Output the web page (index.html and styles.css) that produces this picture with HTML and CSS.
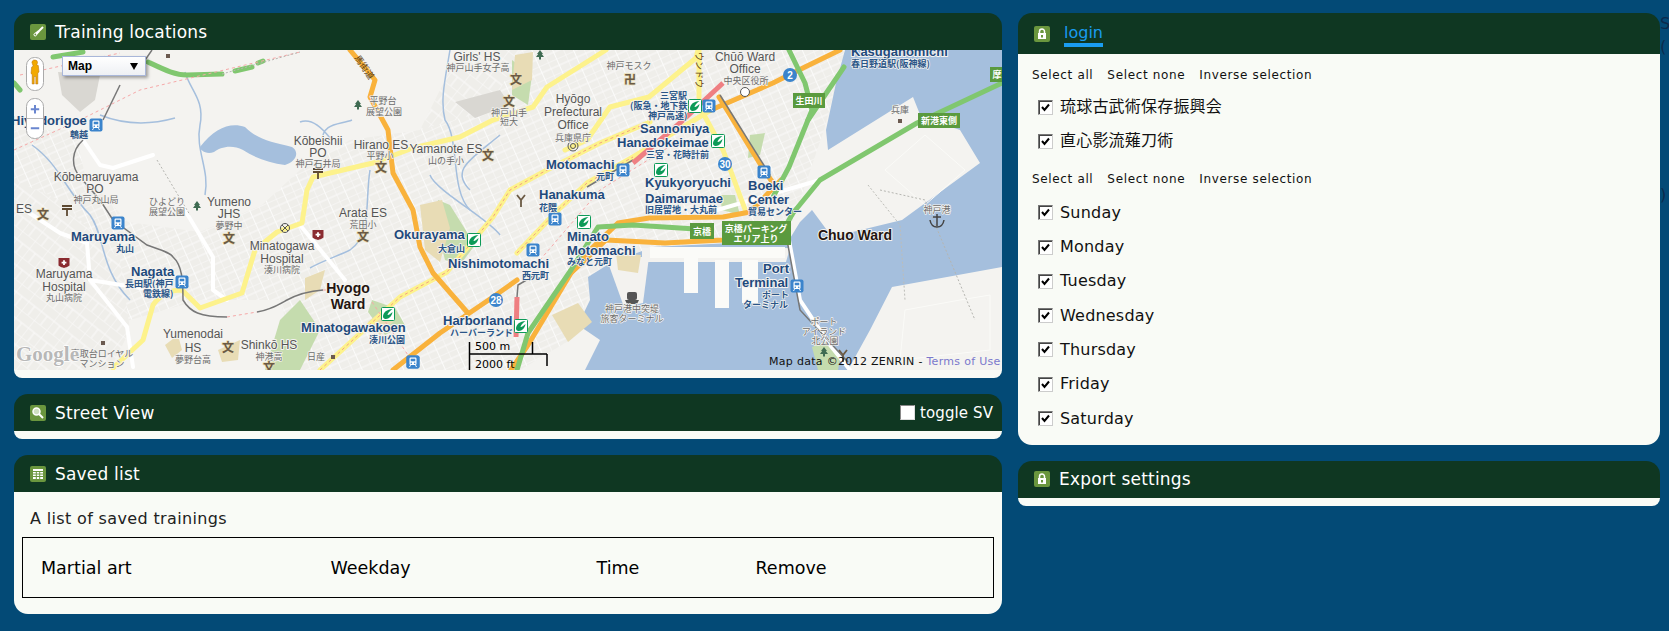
FILE: index.html
```html
<!DOCTYPE html>
<html lang="en">
<head>
<meta charset="utf-8">
<title>Training locations</title>
<link rel="stylesheet" href="styles.css">
</head>
<body>
<div class="page">
  <main class="col-left">
    <section class="panel">
      <header class="head">
        <svg class="ico" viewBox="0 0 16 16"><path class="ico-bg" d="M2 0h12a2 2 0 0 1 2 2v12a2 2 0 0 1-2 2H2a2 2 0 0 1-2-2V2a2 2 0 0 1 2-2z"/><path class="ico-line" d="M13 3 8 8"/><path class="ico-fill" d="M8 6.500 9.500 8l-3 3.500a1.600 1.600 0 1 1-2.200-2.200z"/><circle class="ico-hole" cx="5.300" cy="10.500" r=".9"/></svg>
        <h2 class="title">Training locations</h2>
      </header>
      <div class="map">
        <svg class="map-svg" viewBox="14 50 988 320" xmlns="http://www.w3.org/2000/svg">
          <defs>
            <pattern id="streets" width="19" height="14" patternUnits="userSpaceOnUse" patternTransform="rotate(-24)">
              <rect class="pat-bg" width="19" height="14"/>
              <path class="pat" d="M0 0H19M0 7H19M0 0V14M9.500 0V14"/>
            </pattern>
            <pattern id="streets2" width="16" height="21" patternUnits="userSpaceOnUse" patternTransform="rotate(38)">
              <rect class="pat-bg" width="16" height="21"/>
              <path class="pat" d="M0 0H16M0 10H16M0 0V21M8 10V21"/>
            </pattern>
            <g id="st"><rect class="st-bg" x="-6.500" y="-6.500" width="13" height="13" rx="2"/><rect class="st-w" x="-3.500" y="-4.500" width="7" height="7.500" rx="1.200"/><rect class="st-b" x="-2.300" y="-3.300" width="4.600" height="2.600"/><circle class="st-b" cx="-1.700" cy="1.300" r=".8"/><circle class="st-b" cx="1.700" cy="1.300" r=".8"/><path class="st-wl" d="M-2.500 3.200-3.500 5M2.500 3.200 3.500 5"/></g>
            <g id="mk"><rect class="mk-bg" x="-6.500" y="-6.500" width="13" height="13" rx="1"/><path class="mk-s" d="M-5 3C-5-2-1-4.500 4.500-5 2-3.500 1-2-.5.500-.5 1.500 1.500 1 4.500-2 4 2 1 5-2 5-3.500 5-4.500 4.500-5 3z"/></g>
            <g id="tr"><path class="tree" d="M0-6 3 -2H1.800L4 1H1V3.500H-1V1H-4L-1.800-2H-3z"/></g>
            <g id="hs"><path class="hs" d="M-5.500-5H5.500V2.500C3.500 4 1.500 4.500 0 5-1.500 4.500-3.500 4-5.500 2.500z"/><path class="hs-p" d="M0-2.800V2M-2.400-.4H2.400"/></g>
            <g id="po"><path class="po" d="M-5-5H5M-5-2H5M0-2V5"/></g>
          </defs>

          <rect class="land" x="14" y="50" width="988" height="320"/>
          <path class="city" d="M14 130H75L85 175 128 222 200 232 262 205 300 170 350 140 420 130 445 100 515 50H845L824 130 790 230 650 250 600 270 570 340 520 370H300L280 300 200 300 130 320 14 370z"/>
          <path class="city2" d="M14 180 60 200 120 260 130 330 110 370H14z"/>
          <path class="city2" d="M460 50H520L490 110 420 130 440 90z"/>

          <!-- parks and campuses -->
          <path class="park" d="M265 370 280 320 300 300 310 315 320 330 300 370z"/>
          <path class="park" d="M372 300 395 308 405 325 385 335 368 312z"/>
          <path class="park" d="M438 200 450 205 475 245 460 265 445 260 436 225z"/>
          <path class="park" d="M512 60 532 75 528 105 512 95z"/>
          <path class="park" d="M750 135 765 133 760 155 748 158z"/>
          <path class="park" d="M720 195 735 195 740 215 722 210z"/>
          <path class="camp" d="M420 205 442 200 450 228 440 262 425 250z"/>
          <path class="camp" d="M515 55 533 52 532 80 512 90z"/>
          <path class="camp" d="M165 345 178 335 182 350 172 358z"/>
          <path class="camp" d="M218 350 240 340 238 360 222 362z"/>
          <path class="camp" d="M368 322 382 310 395 320 380 335z"/>
          <path class="camp" d="M305 278 325 270 320 290 305 300z"/>
          <path class="gr" d="M455 102 500 90 510 105 475 118z"/>
          <path class="gr" d="M58 72 100 75 95 100 80 112 62 95z"/>

          <!-- water -->
          <path class="water" d="M845 50H1002V267L892 287 870 330 848 370H585L600 340 578 325 590 300 588 277 612 262 653 247 789 240 800 222 812 210 832 237 902 220 980 163 960 130 921 117 913 97 828 150 826 130 836 83z"/>
          <path class="water" d="M200 147C215 128 230 122 245 127 258 140 272 142 292 147 300 152 296 162 285 165 270 163 255 158 243 150 232 144 220 147 214 152 206 155 200 150 200 147z"/>
          <path class="bank" d="M642 248H790L786 262H642z"/>
          <path class="bank" d="M606 257 649 257 643 303 624 307z"/>
          <path class="pier" d="M684 253H698V293H684zM715 260H729V308H715zM742 260H758V303H742zM650 247H785V258H650z"/>
          <path class="camp" d="M552 315 578 303 592 322 568 342z"/>
          <path class="camp" d="M616 253 641 255 638 273 618 270z"/>
          <path class="park" d="M812 347 828 340 840 358 838 370H818z"/>
          <path class="outline" d="M885 170 925 135 965 170 925 205zM905 310 960 300 990 295V350L900 360z"/>
          <path class="outline-d" d="M868 185 900 225 905 300"/>

          <!-- streams -->
          <g class="stream">
            <path d="M185 72C190 90 205 100 200 125 195 150 210 170 205 195"/>
            <path d="M100 115C125 125 150 125 175 118"/>
            <path d="M32 145C60 165 65 190 90 215 105 235 100 270 130 300"/>
            <path d="M450 50C445 80 440 100 445 120 460 140 450 190 470 210"/>
            <path d="M352 120C340 125 322 122 322 142M300 122C310 118 320 125 330 138"/>
            <path d="M370 170C365 200 372 235 350 250 340 255 320 262 310 268"/>
            <path d="M430 175C435 190 490 220 500 235"/>
            <path d="M500 135C470 160 450 170 470 190"/>
          </g>

          <!-- white arterial roads -->
          <g class="road-w">
            <path d="M83 140 100 165 113 168 153 155"/>
            <path d="M20 207 60 233 87 243 90 280 127 327 133 367"/>
            <path d="M90 280 153 290"/>
            <path d="M183 207 213 257 213 290 227 300"/>
            <path d="M300 225 345 280"/>
            <path d="M789 240 800 300 830 345 850 370"/>
            <path d="M820 180 700 215"/>
          </g>

          <!-- yellow roads -->
          <g class="road-y">
            <path d="M113 368 143 340 153 305C160 295 170 290 182 290L200 308 242 293 255 250 277 232 302 223 307 190 313 177 373 163 413 148 460 137 493 120 533 107 547 87 606 50"/>
            <path d="M565 150 587 140 610 107 649 97 696 58 698 50"/>
            <path d="M723 150 746 212M703 113 723 150"/>
            <path d="M320 370 400 297 447 272 493 217 510 190 547 170 600 143 650 122"/>
            <path d="M517 253 555 213 587 183 633 157 711 110"/>
            <path d="M699 50V97"/>
          </g>
          <g class="road-d">
            <path d="M320 370 400 297 447 272 493 217 510 190 547 170 600 143 650 122"/>
            <path d="M517 253 555 213 587 183 633 157"/>
          </g>

          <!-- orange expressways -->
          <g class="road-o">
            <path d="M350 50 375 80 370 97 388 130 393 173 413 210 420 247 433 273 467 312"/>
            <path d="M393 370 440 333 493 297 517 280"/>
            <path d="M511 370 528 345 571 273 590 250 618 223 649 218 723 217 750 212 781 180"/>
            <path d="M571 273 606 240 665 243 723 240 782 225"/>
            <path d="M711 110 773 83 805 67 840 50"/>
            <path d="M719 97 762 167 773 183"/>
          </g>
          <text class="rd-t" transform="translate(354 58) rotate(55)">馬街道</text>
          <text class="rd-t" transform="translate(696 52) rotate(90)">ウンドウ</text>

          <!-- green highways -->
          <g class="road-g">
            <path d="M53 57 83 52"/>
            <path d="M14 83 20 90"/>
            <path d="M148 62C165 70 175 75 187 75L222 74"/>
            <path d="M235 71 252 67"/>
            <path d="M258 63 263 61"/>
            <path d="M789 50 805 83 812 110 789 167 773 197"/>
            <path d="M844 67 808 120"/>
            <path d="M1002 83 917 123 820 180 793 213 785 227"/>
            <path d="M517 370 528 333 571 270 598 227 633 225 711 230"/>
          </g>

          <!-- rail lines -->
          <g class="rail">
            <path d="M83 140C72 150 70 165 80 177L100 200 113 220 147 245C160 250 170 252 173 257 182 265 183 280 183 300 190 312 200 317 227 317"/>
            <path d="M257 312C270 310 278 305 287 300 298 294 310 291 323 290"/>
            <path d="M120 85 103 120"/>
            <path d="M152 50 143 63"/>
            <path d="M517 297 518 285 535 275M587 187 633 160"/>
            <path d="M720 95 770 175"/>
            <path d="M787 240 800 310 848 362"/>
          </g>
          <g class="rail-d">
            <path d="M14 150 80 120 140 90 300 52M20 75 120 53"/>
            <path d="M227 317 257 312M323 290H338"/>
            <path d="M372 302 410 358"/>
            <path d="M540 260 600 190 680 140"/>
          </g>
          <g class="rail-r"><path d="M633 163 680 123 723 83"/><path d="M517 297 516 337"/></g>
          <g class="rail-g"><path d="M222 74 300 52M157 160 190 215M880 190 925 200 975 320"/></g>

          <!-- markers -->
          <use href="#st" x="96" y="125"/><use href="#st" x="118" y="223"/><use href="#st" x="182" y="282"/><use href="#st" x="413" y="362"/>
          <use href="#st" x="533" y="250"/><use href="#st" x="555" y="219"/><use href="#st" x="623" y="170"/><use href="#st" x="709" y="106"/>
          <use href="#st" x="764" y="172"/><use href="#st" x="797" y="286"/><use href="#st" x="413" y="362"/>
          <use href="#mk" x="474" y="240"/><use href="#mk" x="388" y="314"/><use href="#mk" x="584" y="222"/><use href="#mk" x="521" y="326"/>
          <use href="#mk" x="695" y="106"/><use href="#mk" x="718" y="141"/><use href="#mk" x="661" y="170"/>
          <use href="#tr" x="358" y="106"/><use href="#tr" x="540" y="56"/><use href="#tr" x="197" y="207"/><use href="#tr" x="824" y="353"/>
          <use href="#hs" x="318" y="235"/><use href="#hs" x="64" y="263"/>
          <use href="#po" x="318" y="174"/><use href="#po" x="67" y="211"/>
          <rect class="sq" x="166" y="54" width="4" height="4"/><rect class="sq" x="101" y="341" width="4" height="4"/><rect class="sq" x="331" y="355" width="4" height="4"/><rect class="sq" x="898" y="119" width="4" height="4"/>
          <circle class="ring" cx="573" cy="146" r="5"/><circle class="ring" cx="573" cy="146" r="2.500"/>
          <circle class="ring2" cx="745" cy="92" r="4.500"/>
          <circle class="ring" cx="285" cy="228" r="4.500"/><path class="ring" d="M282 225 288 231M288 225 282 231"/>
          <path class="yy" d="M517 195 521 200 525 195M521 200V207"/>
          <path class="yy" d="M839 350 843 355 847 350M843 355V362"/>
          <path class="anchor" d="M937 214V226M933 217H941M930 220C931 226 934 227 937 227 940 227 943 226 944 220"/>
          <rect class="ferry" x="627" y="292" width="10" height="8" rx="2"/><path class="ferry" d="M625 300H639L637 304H627z"/>

          <!-- shields -->
          <g class="shield"><circle cx="790" cy="75" r="7"/><circle cx="725" cy="164" r="7"/><circle cx="496" cy="300" r="7"/></g>
          <text class="sh-t" x="790" y="79">2</text><text class="sh-t" x="725" y="168">30</text><text class="sh-t" x="496" y="304">28</text>

          <!-- signs -->
          <g class="sign"><rect x="793" y="93" width="32" height="15"/><rect x="918" y="113" width="42" height="15"/><rect x="990" y="67" width="12" height="15"/><rect x="690" y="223" width="24" height="16"/><rect x="722" y="221" width="69" height="24"/></g>
          <text class="sg" x="809" y="104">生田川</text><text class="sg" x="939" y="124">新港東側</text><text class="sg" x="997" y="78">摩</text><text class="sg" x="702" y="235">京橋</text><text class="sg" x="756" y="232">京橋パーキング</text><text class="sg" x="756" y="242">エリア上り</text>

          <!-- place labels -->
          <g class="lbl">
            <text x="96" y="181">Kōbemaruyama</text><text x="95" y="193">PO</text>
            <text x="318" y="145">Kōbeishii</text><text x="318" y="157">PO</text>
            <text x="381" y="149">Hirano ES</text><text x="446" y="153">Yamanote ES</text>
            <text x="477" y="61">Girls' HS</text>
            <text x="573" y="103">Hyōgo</text><text x="573" y="116">Prefectural</text><text x="573" y="129">Office</text>
            <text x="745" y="61">Chūō Ward</text><text x="745" y="73">Office</text>
            <text x="229" y="206">Yumeno</text><text x="229" y="218">JHS</text>
            <text x="363" y="217">Arata ES</text>
            <text x="282" y="250">Minatogawa</text><text x="282" y="263">Hospital</text>
            <text x="64" y="278">Maruyama</text><text x="64" y="291">Hospital</text>
            <text x="193" y="338">Yumenodai</text><text x="193" y="352">HS</text>
            <text x="269" y="349">Shinkō HS</text>
            <text x="24" y="213">ES</text>
          </g>
          <g class="lbl-j">
            <text x="318" y="167">神戸石井局</text><text x="380" y="159">平野小</text><text x="446" y="164">山の手小</text>
            <text x="478" y="71">神戸山手女子高</text><text x="383" y="104">平野台</text><text x="384" y="115">展望公園</text>
            <text x="509" y="116">神戸山手</text><text x="509" y="125">短大</text><text x="573" y="141">兵庫県庁</text>
            <text x="629" y="69">神戸モスク</text><text x="746" y="84">中央区役所</text><text x="900" y="113">兵庫</text>
            <text x="937" y="213">神戸港</text><text x="632" y="312">神戸港中突堤</text><text x="632" y="322">旅客ターミナル</text>
            <text x="824" y="325">ポート</text><text x="824" y="335">アイランド</text><text x="825" y="344">北公園</text>
            <text x="96" y="203">神戸丸山局</text><text x="167" y="205">ひよどり</text><text x="167" y="215">展望公園</text>
            <text x="229" y="229">夢野中</text><text x="363" y="228">荒田小</text><text x="282" y="273">湊川病院</text>
            <text x="64" y="301">丸山病院</text><text x="193" y="363">夢野台高</text><text x="269" y="360">神港高</text>
            <text x="316" y="360">日産</text><text x="102" y="357">高取台ロイヤル</text><text x="102" y="367">マンション</text>
            <text x="630" y="84" class="big">卍</text><text x="516" y="84" class="big">文</text><text x="509" y="106" class="big">文</text>
            <text x="488" y="160" class="big">文</text><text x="381" y="172" class="big">文</text><text x="229" y="243" class="big">文</text>
            <text x="363" y="241" class="big">文</text><text x="228" y="352" class="big">文</text><text x="269" y="372" class="big">文</text><text x="43" y="219" class="big">文</text>
          </g>
          <g class="stn">
            <text x="11" y="125">Hiyodorigoe</text><text x="71" y="241">Maruyama</text><text x="131" y="276">Nagata</text>
            <text x="394" y="239">Okurayama</text><text x="301" y="332">Minatogawakoen</text><text x="448" y="268">Nishimotomachi</text>
            <text x="443" y="325">Harborland</text><text x="546" y="169">Motomachi</text><text x="539" y="199">Hanakuma</text>
            <text x="567" y="241">Minato</text><text x="567" y="255">Motomachi</text><text x="640" y="133">Sannomiya</text>
            <text x="617" y="147">Hanadokeimae</text><text x="645" y="187">Kyukyoryuchi</text><text x="645" y="203">Daimarumae</text>
            <text x="748" y="190">Boeki</text><text x="748" y="204">Center</text><text x="763" y="273">Port</text><text x="735" y="287">Terminal</text>
            <text x="851" y="56">Kasuganomichi</text>
          </g>
          <g class="stn-j">
            <text x="70" y="138">鵯越</text><text x="116" y="252">丸山</text><text x="125" y="287">長田駅(神戸</text><text x="143" y="297">電鉄線)</text>
            <text x="438" y="252">大倉山</text><text x="369" y="343">湊川公園</text><text x="522" y="279">西元町</text><text x="450" y="336">ハーバーランド</text>
            <text x="596" y="180">元町</text><text x="539" y="211">花隈</text><text x="567" y="265">みなと元町</text><text x="660" y="99">三宮駅</text>
            <text x="630" y="109">(阪急・地下鉄</text><text x="648" y="119">神戸高速)</text><text x="646" y="158">三宮・花時計前</text>
            <text x="645" y="213">旧居留地・大丸前</text><text x="748" y="215">貿易センター</text><text x="851" y="67">春日野道駅(阪神線)</text>
            <text x="762" y="298">ポート</text><text x="743" y="308">ターミナル</text>
          </g>
          <text class="ward" x="348" y="293">Hyogo</text><text class="ward" x="348" y="309">Ward</text><text class="ward" x="855" y="240">Chuo Ward</text>

          <!-- map chrome -->
          <text class="google" x="16" y="361">Google</text>
          <path class="scale" d="M469.500 342V370M469.500 354H547M532.500 342V354M547 354V366"/>
          <text class="scale-t" x="475" y="350">500 m</text><text class="scale-t" x="475" y="368">2000 ft</text>
          <text class="attr" x="769" y="365">Map data ©2012 ZENRIN - <tspan class="terms">Terms of Use</tspan></text>

          <rect class="pill" x="26.500" y="57.500" width="17" height="33" rx="8"/>
          <path class="peg" d="M35 60a2.500 2.500 0 0 1 2.500 2.500 2.500 2.500 0 0 1-1 2l1.800 1 .7 6.500-1.200 1V84h-2v-7.500h-1.600V84h-2v-9.500l-1.200-1 .7-6.500 1.800-1a2.500 2.500 0 0 1-1-2A2.500 2.500 0 0 1 35 60z"/>
          <rect class="pill" x="26.500" y="98.500" width="17" height="40" rx="8"/>
          <path class="pill-l" d="M27 118.500H43"/>
          <path class="zoom" d="M35 105V113.500M30.800 109.300H39.200M30.800 128.300H39.200"/>
        </svg>
        <div class="maptype"><span>Map</span><i class="tri"></i></div>
      </div>
      <div class="strip"></div>
    </section>

    <section class="panel">
      <header class="head">
        <svg class="ico" viewBox="0 0 16 16"><path class="ico-bg" d="M2 0h12a2 2 0 0 1 2 2v12a2 2 0 0 1-2 2H2a2 2 0 0 1-2-2V2a2 2 0 0 1 2-2z"/><circle class="ico-ring" cx="6.500" cy="6.500" r="3.500"/><path class="ico-line" d="m9 9 4 4"/></svg>
        <h2 class="title">Street View</h2>
        <label class="toggle"><span class="box"></span>toggle SV</label>
      </header>
      <div class="strip"></div>
    </section>

    <section class="panel">
      <header class="head">
        <svg class="ico" viewBox="0 0 16 16"><path class="ico-bg" d="M2 0h12a2 2 0 0 1 2 2v12a2 2 0 0 1-2 2H2a2 2 0 0 1-2-2V2a2 2 0 0 1 2-2z"/><path class="ico-fill" d="M3 3h10v10H3z"/><path class="ico-grid" d="M3 5.500h10M3 8h10M3 10.500h10M6.300 5.500V13M9.700 5.500V13"/></svg>
        <h2 class="title">Saved list</h2>
      </header>
      <div class="body saved">
        <p class="saved-note">A list of saved trainings</p>
        <table class="saved-table">
          <thead><tr><th class="c1">Martial art</th><th class="c2">Weekday</th><th class="c3">Time</th><th>Remove</th></tr></thead>
        </table>
      </div>
    </section>
  </main>

  <aside class="col-right">
    <section class="panel">
      <header class="head head-tabs">
        <svg class="ico" viewBox="0 0 16 16"><path class="ico-bg" d="M2 0h12a2 2 0 0 1 2 2v12a2 2 0 0 1-2 2H2a2 2 0 0 1-2-2V2a2 2 0 0 1 2-2z"/><path class="ico-lock" d="M5.500 7V5.500a2.500 2.500 0 0 1 5 0V7"/><path class="ico-fill" d="M4 7h8v6H4z"/><rect class="ico-hole" x="7" y="9" width="2" height="2.500"/></svg>
        <a class="tab">login</a>
      </header>
      <div class="body form">
        <div class="links"><span>Select all</span><span>Select none</span><span>Inverse selection</span></div>
        <ul class="checks">
          <li><span class="cb"><svg viewBox="0 0 11 11"><path d="M2 5 4.500 8 9 2.500"/></svg></span>琉球古武術保存振興会</li>
          <li><span class="cb"><svg viewBox="0 0 11 11"><path d="M2 5 4.500 8 9 2.500"/></svg></span>直心影流薙刀術</li>
        </ul>
        <div class="links links-2"><span>Select all</span><span>Select none</span><span>Inverse selection</span></div>
        <ul class="checks checks-days">
          <li><span class="cb"><svg viewBox="0 0 11 11"><path d="M2 5 4.500 8 9 2.500"/></svg></span>Sunday</li>
          <li><span class="cb"><svg viewBox="0 0 11 11"><path d="M2 5 4.500 8 9 2.500"/></svg></span>Monday</li>
          <li><span class="cb"><svg viewBox="0 0 11 11"><path d="M2 5 4.500 8 9 2.500"/></svg></span>Tuesday</li>
          <li><span class="cb"><svg viewBox="0 0 11 11"><path d="M2 5 4.500 8 9 2.500"/></svg></span>Wednesday</li>
          <li><span class="cb"><svg viewBox="0 0 11 11"><path d="M2 5 4.500 8 9 2.500"/></svg></span>Thursday</li>
          <li><span class="cb"><svg viewBox="0 0 11 11"><path d="M2 5 4.500 8 9 2.500"/></svg></span>Friday</li>
          <li><span class="cb"><svg viewBox="0 0 11 11"><path d="M2 5 4.500 8 9 2.500"/></svg></span>Saturday</li>
        </ul>
      </div>
    </section>

    <section class="panel">
      <header class="head">
        <svg class="ico" viewBox="0 0 16 16"><path class="ico-bg" d="M2 0h12a2 2 0 0 1 2 2v12a2 2 0 0 1-2 2H2a2 2 0 0 1-2-2V2a2 2 0 0 1 2-2z"/><path class="ico-lock" d="M5.500 7V5.500a2.500 2.500 0 0 1 5 0V7"/><path class="ico-fill" d="M4 7h8v6H4z"/><rect class="ico-hole" x="7" y="9" width="2" height="2.500"/></svg>
        <h2 class="title">Export settings</h2>
      </header>
      <div class="strip"></div>
    </section>
  </aside>

  <div class="col-edge">
    <span class="edge-s">S</span>
    <span class="edge-open">(</span>
    <span class="edge-close">)</span>
  </div>
</div>
</body>
</html>
```
FILE: styles.css
```css
* { box-sizing: border-box; }
html, body { margin: 0; height: 100%; overflow: hidden; background: #034a76; }
body { font-family: "DejaVu Sans", Verdana, sans-serif; color: #111; }
.page { display: flex; width: 1669px; height: 631px; padding: 13px 0 0 14px; overflow: hidden; }
.col-left { flex: 0 0 988px; margin-right: 16px; display: flex; flex-direction: column; gap: 16px; }
.col-right { flex: 0 0 642px; display: flex; flex-direction: column; gap: 16px; }
.col-edge { flex: 0 0 9px; overflow: hidden; display: flex; flex-direction: column; color: #0b2a4c; font-size: 16px; line-height: 18px; white-space: nowrap; }
.edge-s { margin-top: 2px; }
.edge-open { margin-top: 5px; }
.edge-close { margin-top: 130px; }

.panel { display: flex; flex-direction: column; }
.head { display: flex; align-items: center; height: 37px; padding: 0 9px 0 16px; background: #0f3722; border-radius: 14px 14px 0 0; color: #fff; }
.head-tabs { height: 41px; align-items: flex-start; padding-top: 13px; }
.ico { flex: none; width: 16px; height: 16px; margin-right: 9px; }
.ico-bg { fill: #6a963e; }
.ico-fill { fill: #fff; }
.ico-line { fill: none; stroke: #fff; stroke-width: 2; }
.ico-ring { fill: #cfe0c0; stroke: #fff; stroke-width: 1.500; }
.ico-grid { fill: none; stroke: #6a963e; stroke-width: 1; }
.ico-lock { fill: none; stroke: #fff; stroke-width: 1.500; }
.ico-hole { fill: #6a963e; }
.title { margin: 0; font-size: 17px; font-weight: 400; letter-spacing: .2px; line-height: 18px; }
.toggle { margin-left: auto; display: flex; align-items: center; gap: 5px; font-size: 15px; line-height: 18px; letter-spacing: .1px; }
.box { width: 15px; height: 15px; background: #fff; border: 1px solid; border-color: #888 #ddd #ddd #888; }
.tab { margin-left: 5px; margin-top: -2px; height: 23px; font-size: 16px; line-height: 18px; color: #1a9cf0; border-bottom: 4px solid #1a9cf0; }

.strip { height: 8px; background: #f9fbf6; border-radius: 0 0 14px 14px; }
.body { background: #f9fbf6; border-radius: 0 0 14px 14px; }

.map { position: relative; height: 320px; overflow: hidden; background: #f3f2ef; }
.map-svg { display: block; width: 988px; height: 320px; }
.maptype { position: absolute; left: 48px; top: 6px; width: 84px; height: 20px; padding: 0 4px 0 5px; display: flex; align-items: center; justify-content: space-between; background: linear-gradient(#fff, #eef0f4); border: 1px solid #a9b7d9; box-shadow: 2px 2px 3px rgba(0,0,0,.35); font: 700 12px/18px "Liberation Sans", sans-serif; color: #000; }
.tri { width: 0; height: 0; border-left: 4px solid transparent; border-right: 4px solid transparent; border-top: 7px solid #000; margin-right: 3px; }

/* map drawing */
.land { fill: #f4f3f0; }
.city { fill: url(#streets); }
.city2 { fill: url(#streets2); }
.pat-bg { fill: #efeeea; }
.pat { fill: none; stroke: #fbfbfa; stroke-width: 1; }
.park { fill: #c5dcae; }
.gr { fill: #d9d7d2; }
.camp { fill: #e8dcb5; }
.water { fill: #a5bfdd; }
.bank { fill: #f3f2ef; }
.pier { fill: #fbfbf8; }
.outline { fill: none; stroke: #fbfbf8; stroke-width: 1; }
.outline-d { fill: none; stroke: #bdbdb8; stroke-width: 1; stroke-dasharray: 2 2; }
.stream path { fill: none; stroke: #a5bfdd; stroke-width: 1.500; }
.road-w path { fill: none; stroke: #fff; stroke-width: 4; stroke-linejoin: round; stroke-linecap: round; }
.road-y path { fill: none; stroke: #fdf28c; stroke-width: 5; stroke-linejoin: round; stroke-linecap: round; }
.road-d path { fill: none; stroke: #f4a27e; stroke-width: 1; stroke-dasharray: 3 3; }
.road-o path { fill: none; stroke: #f9b23c; stroke-width: 5; stroke-linejoin: round; stroke-linecap: round; }
.road-g path { fill: none; stroke: #80c76f; stroke-width: 5; stroke-linejoin: round; stroke-linecap: round; }
.rd-t { fill: #5a3d14; font: 9px "Noto Sans CJK JP", sans-serif; }
.rail path { fill: none; stroke: #777; stroke-width: 1.500; }
.rail-d path { fill: none; stroke: #f6a8a8; stroke-width: 1; stroke-dasharray: 3 3; }
.rail-r path { fill: none; stroke: #ef7f82; stroke-width: 5; }
.rail-g path { fill: none; stroke: #b5b5b0; stroke-width: 1; stroke-dasharray: 2 2; }
.st-bg { fill: #3b84cc; }
.st-w { fill: #fff; }
.st-b { fill: #3b84cc; }
.st-wl { fill: none; stroke: #fff; stroke-width: 1; }
.mk-bg { fill: #fff; stroke: #0d9a58; stroke-width: 1; }
.mk-s { fill: #0d9a58; }
.tree { fill: #3f6b52; }
.hs { fill: #8a2b30; }
.hs-p { fill: none; stroke: #fff; stroke-width: 1.800; }
.po { fill: none; stroke: #5e4a32; stroke-width: 1.800; }
.sq { fill: #6b5a50; }
.ring { fill: none; stroke: #555; stroke-width: 1; }
.ring2 { fill: #fff; stroke: #555; stroke-width: 1; }
.yy { fill: none; stroke: #6b5a44; stroke-width: 1.800; }
.anchor { fill: none; stroke: #444; stroke-width: 1.500; }
.ferry { fill: #555; }
.shield circle { fill: #3b84cc; }
.sh-t { fill: #fff; font: 700 10px "Liberation Sans", sans-serif; text-anchor: middle; }
.sign rect { fill: #5a9a3e; }
.sg { fill: #fff; font: 700 9px "Liberation Sans", "Noto Sans CJK JP", sans-serif; text-anchor: middle; }

.lbl text, .lbl-j text, .stn text, .stn-j text, .ward, .google { paint-order: stroke; stroke-linejoin: round; }
.lbl text { fill: #555; stroke: #f4f3f0; stroke-width: 2; font: 12px "Liberation Sans", sans-serif; text-anchor: middle; }
.lbl-j text { fill: #6c6c6c; stroke: #f4f3f0; stroke-width: 1.500; font: 9px "Noto Sans CJK JP", sans-serif; text-anchor: middle; }
.lbl-j .big { fill: #6b5a44; stroke: #e8dcb5; font: 700 12px "Noto Sans CJK JP", sans-serif; }
.stn text { fill: #1f4a7c; stroke: #f4f3f0; stroke-width: 2; font: 700 13px "Liberation Sans", sans-serif; }
.stn-j text { fill: #2b5688; stroke: #f4f3f0; stroke-width: 1.500; font: 700 9px "Noto Sans CJK JP", sans-serif; }
.ward { fill: #231510; stroke: #f4f3f0; stroke-width: 2; font: 700 14px "Liberation Sans", sans-serif; text-anchor: middle; }
.google { fill: #b8b8b8; stroke: #fff; stroke-width: 1.500; font: 700 21px "Liberation Serif", serif; }
.scale { fill: none; stroke: #000; stroke-width: 1.500; }
.scale-t { fill: #000; font: 11px "DejaVu Sans", sans-serif; }
.attr { fill: #111; font: 11px "DejaVu Sans", sans-serif; letter-spacing: .3px; }
.terms { fill: #7a78cc; }
.pill { fill: #fff; stroke: #aaa; stroke-width: 1; }
.pill-l { stroke: #bbb; stroke-width: 1; }
.peg { fill: #f2a900; stroke: #b06a10; stroke-width: .5; }
.zoom { fill: none; stroke: #6a86cf; stroke-width: 2; }

/* right panel form */
.form { padding: 12px 14px 9px; }
.links { display: flex; gap: 14px; font-size: 12px; line-height: 18px; letter-spacing: .65px; color: #111; }
.links-2 { margin-top: 11px; }
.checks { list-style: none; margin: 6px 0 0; padding: 0 0 0 6px; }
.checks-days { margin-top: 8px; }
.checks li { display: flex; align-items: center; height: 34.300px; letter-spacing: .2px; font: 16px/20px "DejaVu Sans", "Noto Sans CJK JP", sans-serif; }
.cb { flex: none; width: 15px; height: 15px; margin-right: 7px; background: #fff; border: 1px solid; border-color: #777 #ccc #ccc #777; box-shadow: inset 1px 1px 0 #444; display: flex; align-items: center; justify-content: center; }
.cb svg { width: 11px; height: 11px; }
.cb path { fill: none; stroke: #000; stroke-width: 2; }

/* saved list */
.saved { padding: 17px 8px 16px; }
.saved-note { margin: 0 0 8px 8px; font-size: 16px; line-height: 20px; letter-spacing: .35px; color: #222; }
.saved-table { width: 972px; height: 61px; table-layout: fixed; border: 1px solid #000; border-collapse: collapse; }
.saved-table th { padding: 0; font-size: 17.500px; font-weight: 400; text-align: left; color: #000; }
.c1 { padding-left: 18px !important; width: 308px; }
.c2 { width: 266px; }
.c3 { width: 159px; }
```
